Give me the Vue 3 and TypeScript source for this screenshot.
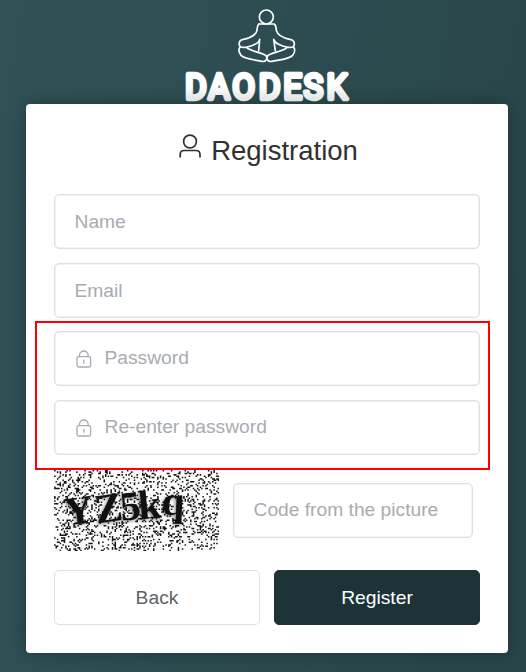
<script setup lang="ts">
import { ref } from 'vue'

interface Field {
  key: string
  label: string
  type: string
}

const identityFields: Field[] = [
  { key: 'name', label: 'Name', type: 'text' },
  { key: 'email', label: 'Email', type: 'text' },
]
const passwordFields: Field[] = [
  { key: 'password', label: 'Password', type: 'password' },
  { key: 'repeat', label: 'Re-enter password', type: 'password' },
]
const form = ref<Record<string, string>>({ name: '', email: '', password: '', repeat: '', code: '' })

// Speckle pattern laid over the captcha characters, on a 120 x 59 grid.
function buildNoise(): string {
  let seed = 20731
  const next = (): number => {
    seed = (seed * 16807) % 2147483647
    return seed / 2147483647
  }
  let d = ''
  for (let y = 0; y < 59; y++) {
    for (let x = 0; x < 120; x++) {
      if (next() < 0.2) d += `M${x} ${y}h1.1v1.1h-1.1z`
    }
  }
  return d
}
const noise = buildNoise()

// Characters of the captcha with their own position, size and tilt.
const glyphs = [
  { c: 'Y', x: 9, y: 40.5, size: 29, tilt: -8 },
  { c: 'Z', x: 31, y: 39, size: 30, tilt: -8 },
  { c: '5', x: 49, y: 37, size: 30, tilt: -6 },
  { c: 'k', x: 62, y: 36, size: 30, tilt: -5 },
  { c: 'q', x: 78, y: 32.5, size: 30, tilt: 2 },
]
</script>

<template>
  <div class="page">
    <header class="brand">
      <svg class="logo" viewBox="0 0 570 312" width="190" height="104">
        <defs>
          <linearGradient id="wordmark" gradientUnits="userSpaceOnUse" x1="0" y1="213" x2="0" y2="303">
            <stop offset="0.5" stop-color="#fff" />
            <stop offset="1" stop-color="#dfe2e3" />
          </linearGradient>
        </defs>
        <g class="figure">
          <circle cx="289" cy="51" r="21" />
          <path d="M267 72C261 76 262 82 261 91C257 108 240 114 220 118C206 120 205 134 211 140C219 145 240 139 252 134C263 130 267 126 269 118L266 152M211 140C205 147 207 158 213 166C224 178 259 180 275 184C288 187 295 174 287 166C276 158 250 156 232 145" />
          <path d="M267 72H312C319 76 318 82 319 91C323 108 341 114 360 118C374 120 376 134 370 140C362 145 341 139 329 134C318 130 314 126 311 118L316 152M370 140C376 147 374 158 368 166C357 178 322 180 306 184C293 187 286 174 294 166C305 158 331 156 349 145" />
        </g>
        <text class="wordmark" x="48.5 123.5 201 286.5 365 431 505" y="296.5" transform="scale(0.93 1)">DAODESK</text>
      </svg>
    </header>

    <main class="card">
      <h1 class="title">
        <svg class="person" viewBox="0 0 24 26" width="24" height="26">
          <circle cx="12" cy="8.5" r="6.4" />
          <path d="M2.2 24.5V21.5Q2.2 17.5 6.2 17.5H18Q22 17.5 22 21.5V24.5" />
        </svg>
        <span>Registration</span>
      </h1>

      <form @submit.prevent>
        <div class="fields">
          <label v-for="f in identityFields" :key="f.key" class="field">
            <input v-model="form[f.key]" :type="f.type" :placeholder="f.label" />
          </label>
        </div>
        <div class="fields secret">
          <label v-for="f in passwordFields" :key="f.key" class="field">
            <svg class="lock" viewBox="0 0 16 18" width="16" height="18">
              <rect x="1" y="6.7" width="13.6" height="10.3" rx="1.6" />
              <path d="M3.5 6.5V5.3A4.3 4.3 0 0 1 12.1 5.3V6.5M7.8 9.7V13.8" />
            </svg>
            <input v-model="form[f.key]" :type="f.type" :placeholder="f.label" />
          </label>
          <span class="marker"></span>
        </div>

        <div class="check">
          <svg class="captcha" viewBox="0 0 120 59" width="165" height="81">
            <rect width="120" height="59" fill="#fcfcfc" />
            <path :d="noise" fill="#151515" />
            <g class="shade">
              <text v-for="g in glyphs" :key="g.c" :x="g.x" :y="g.y" :font-size="g.size"
                :transform="`rotate(${g.tilt} ${g.x} ${g.y})`">{{ g.c }}</text>
            </g>
          </svg>
          <label class="field code">
            <input v-model="form.code" type="text" placeholder="Code from the picture" />
          </label>
        </div>

        <div class="actions">
          <button type="button" class="btn">Back</button>
          <button type="submit" class="btn primary">Register</button>
        </div>
      </form>
    </main>
  </div>
</template>

<style>
body {
  margin: 0;
}
</style>

<style scoped>
.page {
  box-sizing: border-box;
  height: 672px;
  padding: 0 18px 19px 26px;
  overflow: hidden;
  background: linear-gradient(100deg, #305257 0%, #284549 100%);
  font-family: "Liberation Sans", Arial, sans-serif;
}
.brand {
  display: flex;
  height: 104px;
  padding-left: 144px;
}
.logo {
  display: block;
  overflow: visible;
}
.figure {
  fill: none;
  stroke: #fff;
  stroke-width: 5;
  stroke-linecap: round;
  stroke-linejoin: round;
}
.wordmark {
  font: 400 107px Roboto, sans-serif;
  fill: url(#wordmark);
  stroke: url(#wordmark);
  stroke-width: 13;
  stroke-linejoin: round;
}
.card {
  box-sizing: border-box;
  height: 549px;
  padding: 28px;
  border-radius: 4px;
  background: #fff;
  box-shadow: 0 0 18px rgba(0, 0, 0, 0.3);
}
.title {
  display: flex;
  justify-content: center;
  gap: 9px;
  height: 62px;
  margin: 0;
  padding-left: 2px;
  box-sizing: border-box;
  color: #303133;
  font-size: 27.5px;
  font-weight: 400;
  line-height: 37px;
}
.person {
  margin-top: 1px;
  fill: none;
  stroke: #303133;
  stroke-width: 1.7;
}
.fields {
  display: flex;
  flex-direction: column;
  gap: 14px;
}
.secret {
  position: relative;
  margin-top: 13px;
}
.marker {
  position: absolute;
  inset: -10px -10px -15px -19px;
  border: 2px solid #f00;
  pointer-events: none;
}
.field {
  box-sizing: border-box;
  display: flex;
  align-items: center;
  gap: 12.5px;
  height: 55px;
  padding: 0 19.5px;
  border: 1px solid #dcdfe6;
  border-radius: 5px;
  background: #fff;
  box-shadow: inset 0 0 0 0.5px #e5e7ec;
}
.secret .field {
  padding-left: 21px;
}
.secret input,
.code input {
  padding-bottom: 2px;
}
input {
  flex: 1;
  min-width: 0;
  padding: 0;
  border: 0;
  outline: 0;
  background: transparent;
  color: #606266;
  font: 19.23px "Liberation Sans", Arial, sans-serif;
}
input::placeholder {
  color: #a8abb2;
  opacity: 1;
}
.lock {
  flex: none;
  fill: none;
  stroke: #a8abb2;
  stroke-width: 1.3;
}
.check {
  display: flex;
  gap: 14px;
  padding: 15px 7px 0 0;
}
.captcha {
  flex: none;
}
.shade {
  font-family: "Liberation Serif", serif;
  font-weight: 700;
  fill: #111;
  filter: drop-shadow(-1px 1px 1.2px rgba(0, 0, 0, 0.45)) blur(0.4px);
}
.code {
  flex: 1;
  min-width: 0;
  margin-top: 13px;
}
.actions {
  display: grid;
  grid-template-columns: 1fr 1fr;
  gap: 14px;
  margin-top: 19px;
}
.btn {
  height: 55px;
  padding: 0;
  border: 1px solid #dcdfe6;
  border-radius: 5px;
  background: #fff;
  color: #606266;
  font: 19.25px "Liberation Sans", Arial, sans-serif;
}
.primary {
  border-color: #1c3438;
  background: #1c3438;
  color: #fff;
}
</style>
